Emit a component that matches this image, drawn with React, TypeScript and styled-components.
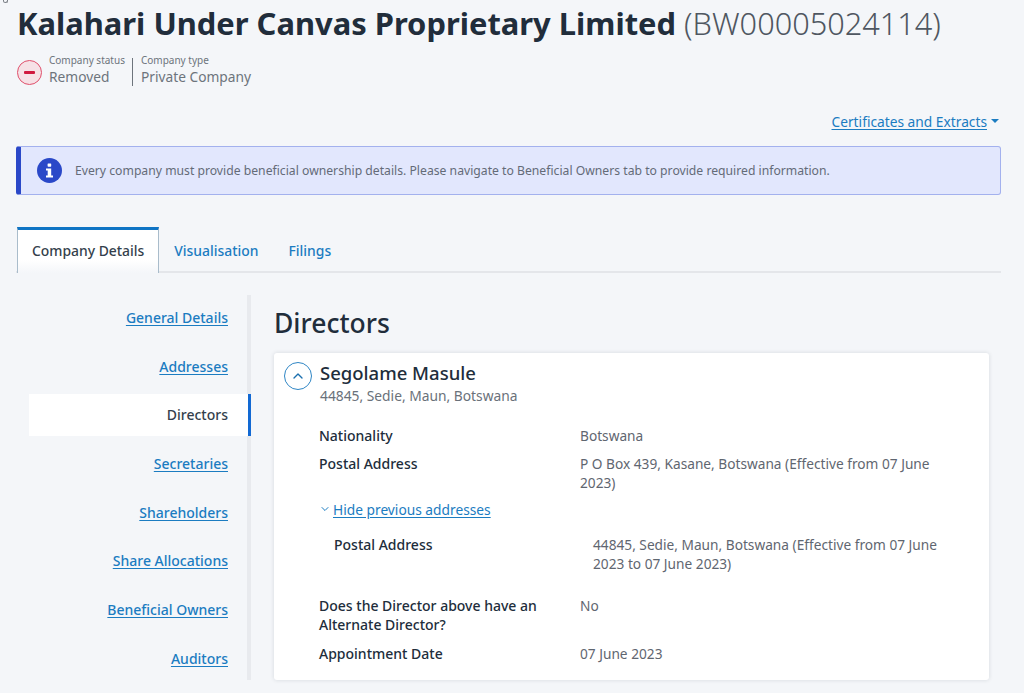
import React from "react";
import styled, { createGlobalStyle } from "styled-components";
import { ChevronUp, ChevronDown } from "lucide-react";

const Global = createGlobalStyle`
  html, body { margin: 0; padding: 0; background: #f4f6f9; height: 693px; overflow: hidden; }
  body { font-family: "Noto Sans", "Open Sans", sans-serif; color: #212d3b; }
  a { color: #1b7cc1; }
`;

const Page = styled.div`
  position: relative;
  display: flex;
  flex-direction: column;
  height: 693px;
  overflow: hidden;
  padding: 0 23px 0 16px;
  box-sizing: border-box;
`;

const ClippedMark = styled.span`
  position: absolute;
  top: 0;
  left: 3px;
  width: 3px;
  height: 2px;
  border: 1px solid #7a7f86;
  border-top: none;
  border-radius: 0 0 3px 3px;
`;

const TitleRow = styled.h1`
  margin: 0;
  padding: 3px 0 0 1px;
  font-size: 30.9px;
  line-height: 41px;
  font-weight: 700;
  color: #212d3b;
  white-space: nowrap;
`;

const TitleId = styled.span`
  font-size: 30.7px;
  font-weight: 300;
  color: #4f5761;
`;

const StatusRow = styled.div`
  display: flex;
  align-items: center;
  margin-top: 14px;
  height: 28px;
`;

const StatusIcon = styled.div`
  width: 25px;
  height: 25px;
  box-sizing: border-box;
  border: 1px solid #e0506c;
  border-radius: 50%;
  background: #f6e1e6;
  display: flex;
  align-items: center;
  justify-content: center;
  margin: 0 7px 0 1px;
  &::before {
    content: "";
    width: 11px;
    height: 3px;
    background: #d0193f;
    border-radius: 1px;
  }
`;

const Stat = styled.div<{ $divider?: boolean }>`
  display: flex;
  flex-direction: column;
  height: 28px;
  padding-right: ${(p) => (p.$divider ? "7px" : "0")};
  margin-right: ${(p) => (p.$divider ? "8px" : "0")};
  border-right: ${(p) => (p.$divider ? "1px solid #6d747c" : "none")};
`;

const StatLabel = styled.span`
  font-size: 10px;
  line-height: 12px;
  margin-top: -4px;
  color: #6d747c;
  white-space: nowrap;
`;

const StatValue = styled.span`
  font-size: 13.75px;
  line-height: 19px;
  margin-top: 1px;
  color: #6d747c;
  white-space: nowrap;
`;

const ActionRow = styled.div`
  display: flex;
  justify-content: flex-end;
  align-items: center;
  margin-top: 25px;
  padding-right: 2px;
  height: 20px;
  gap: 4px;
`;

const ActionLink = styled.a`
  font-size: 13.75px;
  line-height: 19px;
  color: #1b7cc1;
  text-decoration: underline;
  text-underline-offset: 2px;
`;

const Caret = styled.span`
  width: 0;
  height: 0;
  border-left: 4px solid transparent;
  border-right: 4px solid transparent;
  border-top: 4px solid #1b7cc1;
`;

const Notice = styled.div`
  margin-top: 15px;
  height: 49px;
  box-sizing: border-box;
  background: #e2e7fd;
  border: 1px solid #a3b1ee;
  border-left: 5px solid #2a48c8;
  border-radius: 3px;
  display: flex;
  align-items: center;
  padding-left: 16px;
  gap: 13px;
`;

const InfoIcon = styled.div`
  width: 25px;
  height: 25px;
  border-radius: 50%;
  background: #2a48c8;
  display: flex;
  align-items: center;
  justify-content: center;
  flex-shrink: 0;
`;

const NoticeText = styled.span`
  font-size: 12.2px;
  color: #646b78;
  white-space: nowrap;
`;

const Tabs = styled.div`
  display: flex;
  align-items: stretch;
  margin-top: 32px;
  height: 46px;
  box-sizing: border-box;
  border-bottom: 2px solid #e4e6ea;
`;

const Tab = styled.div<{ $active?: boolean }>`
  display: flex;
  align-items: center;
  padding: 2px 15px 0;
  font-size: 13.9px;
  font-weight: 500;
  color: ${(p) => (p.$active ? "#343f4c" : "#1b7cc1")};
  white-space: nowrap;
  ${(p) =>
    p.$active
      ? `background: linear-gradient(#fff 70%, #f4f6f9);
         border-top: 3px solid #0f74c4;
         border-left: 1px solid #a9bccb;
         border-right: 1px solid #a9bccb;
         margin: 0 0 -2px 1px;
         padding: 0 14px 3px;`
      : ""}
`;

const Body = styled.div`
  display: flex;
  margin-top: 22px;
  flex: 1;
  min-height: 0;
`;

const SideNav = styled.nav`
  width: 235px;
  box-sizing: border-box;
  margin-bottom: 13px;
  border-right: 4px solid #e8eaee;
  display: flex;
  flex-direction: column;
  flex-shrink: 0;
  padding: 1.5px 0 0 13px;
  gap: 6.7px;
`;

const SideItem = styled.div<{ $active?: boolean }>`
  height: 42px;
  display: flex;
  align-items: center;
  justify-content: flex-end;
  font-size: 14px;
  font-weight: 500;
  color: #343f4c;
  margin-right: ${(p) => (p.$active ? "-4px" : "0")};
  background: ${(p) => (p.$active ? "#fff" : "transparent")};
  border-right: ${(p) => (p.$active ? "3px solid #1269d3" : "none")};
  padding-right: ${(p) => (p.$active ? "20px" : "19px")};
`;

const SideLink = styled.a`
  color: #1b7cc1;
  text-decoration: underline;
  text-underline-offset: 2px;
`;

const Main = styled.main`
  flex: 1;
  min-width: 0;
  padding: 0 12px 0 23px;
  display: flex;
  flex-direction: column;
`;

const Heading = styled.h2`
  margin: 0;
  font-size: 26.5px;
  line-height: 36px;
  font-weight: 500;
  color: #212d3b;
  padding-top: 10px;
`;

const Card = styled.section`
  margin-top: 12px;
  height: 327px;
  box-sizing: border-box;
  background: #fff;
  border-radius: 3px;
  box-shadow: 0 0 4px rgba(30, 40, 60, 0.14);
  padding: 7px 10px 8px;
`;

const CardHeader = styled.div`
  display: flex;
  gap: 8px;
`;

const Toggle = styled.div`
  width: 28px;
  height: 28px;
  margin-top: 2px;
  box-sizing: border-box;
  border: 1px solid #2f86c5;
  border-radius: 50%;
  display: flex;
  align-items: center;
  justify-content: center;
  color: #1b6fae;
  flex-shrink: 0;
`;

const Person = styled.div`
  display: flex;
  flex-direction: column;
`;

const PersonName = styled.div`
  font-size: 18.5px;
  line-height: 25px;
  font-weight: 500;
  color: #212d3b;
`;

const PersonAddress = styled.div`
  font-size: 13.8px;
  line-height: 20px;
  color: #6a717a;
  margin-top: 1px;
`;

const Fields = styled.div<{ $nested?: boolean; $top: number; $gap?: number }>`
  display: grid;
  grid-template-columns: ${(p) => (p.$nested ? "259px 350px" : "261px 370px")};
  row-gap: ${(p) => p.$gap ?? 9}px;
  margin-left: ${(p) => (p.$nested ? "50px" : "35px")};
  margin-top: ${(p) => p.$top}px;
`;

const FieldLabel = styled.div`
  font-size: 14px;
  line-height: 19px;
  font-weight: 500;
  color: #212d3b;
`;

const FieldValue = styled.div`
  font-size: 13.7px;
  line-height: 19px;
  color: #5f6670;
`;

const HideRow = styled.div`
  display: flex;
  align-items: center;
  gap: 2px;
  margin: 7px 0 0 35px;
  height: 20px;
  color: #1b7cc1;
`;

const HideLink = styled.a`
  font-size: 13.75px;
  color: #1b7cc1;
  text-decoration: underline;
  text-underline-offset: 2px;
`;

const navItems = [
  "General Details",
  "Addresses",
  "Directors",
  "Secretaries",
  "Shareholders",
  "Share Allocations",
  "Beneficial Owners",
  "Auditors",
];

export default function App() {
  return (
    <>
      <Global />
      <Page>
        <ClippedMark />
        <TitleRow>
          Kalahari Under Canvas Proprietary Limited <TitleId>(BW00005024114)</TitleId>
        </TitleRow>
        <StatusRow>
          <StatusIcon />
          <Stat $divider>
            <StatLabel>Company status</StatLabel>
            <StatValue>Removed</StatValue>
          </Stat>
          <Stat>
            <StatLabel>Company type</StatLabel>
            <StatValue>Private Company</StatValue>
          </Stat>
        </StatusRow>
        <ActionRow>
          <ActionLink>Certificates and Extracts</ActionLink>
          <Caret />
        </ActionRow>
        <Notice>
          <InfoIcon>
            <svg width="9" height="15" viewBox="0 0 9 15" fill="#fff">
              <rect x="2.6" y="0.5" width="3.6" height="3.2" rx="0.6" />
              <path d="M1 5.5h5.2v7H8V14.5H1v-2h1.7v-5H1z" />
            </svg>
          </InfoIcon>
          <NoticeText>
            Every company must provide beneficial ownership details. Please navigate to Beneficial Owners tab to provide required information.
          </NoticeText>
        </Notice>
        <Tabs>
          <Tab $active>Company Details</Tab>
          <Tab>Visualisation</Tab>
          <Tab>Filings</Tab>
        </Tabs>
        <Body>
          <SideNav>
            {navItems.map((n) =>
              n === "Directors" ? (
                <SideItem key={n} $active>{n}</SideItem>
              ) : (
                <SideItem key={n}><SideLink>{n}</SideLink></SideItem>
              )
            )}
          </SideNav>
          <Main>
            <Heading>Directors</Heading>
            <Card>
              <CardHeader>
                <Toggle><ChevronUp size={16} strokeWidth={2} /></Toggle>
                <Person>
                  <PersonName>Segolame Masule</PersonName>
                  <PersonAddress>44845, Sedie, Maun, Botswana</PersonAddress>
                </Person>
              </CardHeader>
              <Fields $top={20}>
                <FieldLabel>Nationality</FieldLabel>
                <FieldValue>Botswana</FieldValue>
                <FieldLabel>Postal Address</FieldLabel>
                <FieldValue>P O Box 439, Kasane, Botswana (Effective from 07 June 2023)</FieldValue>
              </Fields>
              <HideRow>
                <ChevronDown size={12} strokeWidth={2} />
                <HideLink>Hide previous addresses</HideLink>
              </HideRow>
              <Fields $nested $top={16}>
                <FieldLabel>Postal Address</FieldLabel>
                <FieldValue>44845, Sedie, Maun, Botswana (Effective from 07 June 2023 to 07 June 2023)</FieldValue>
              </Fields>
              <Fields $top={23} $gap={10}>
                <FieldLabel>Does the Director above have an Alternate Director?</FieldLabel>
                <FieldValue>No</FieldValue>
                <FieldLabel>Appointment Date</FieldLabel>
                <FieldValue>07 June 2023</FieldValue>
              </Fields>
            </Card>
          </Main>
        </Body>
      </Page>
    </>
  );
}
